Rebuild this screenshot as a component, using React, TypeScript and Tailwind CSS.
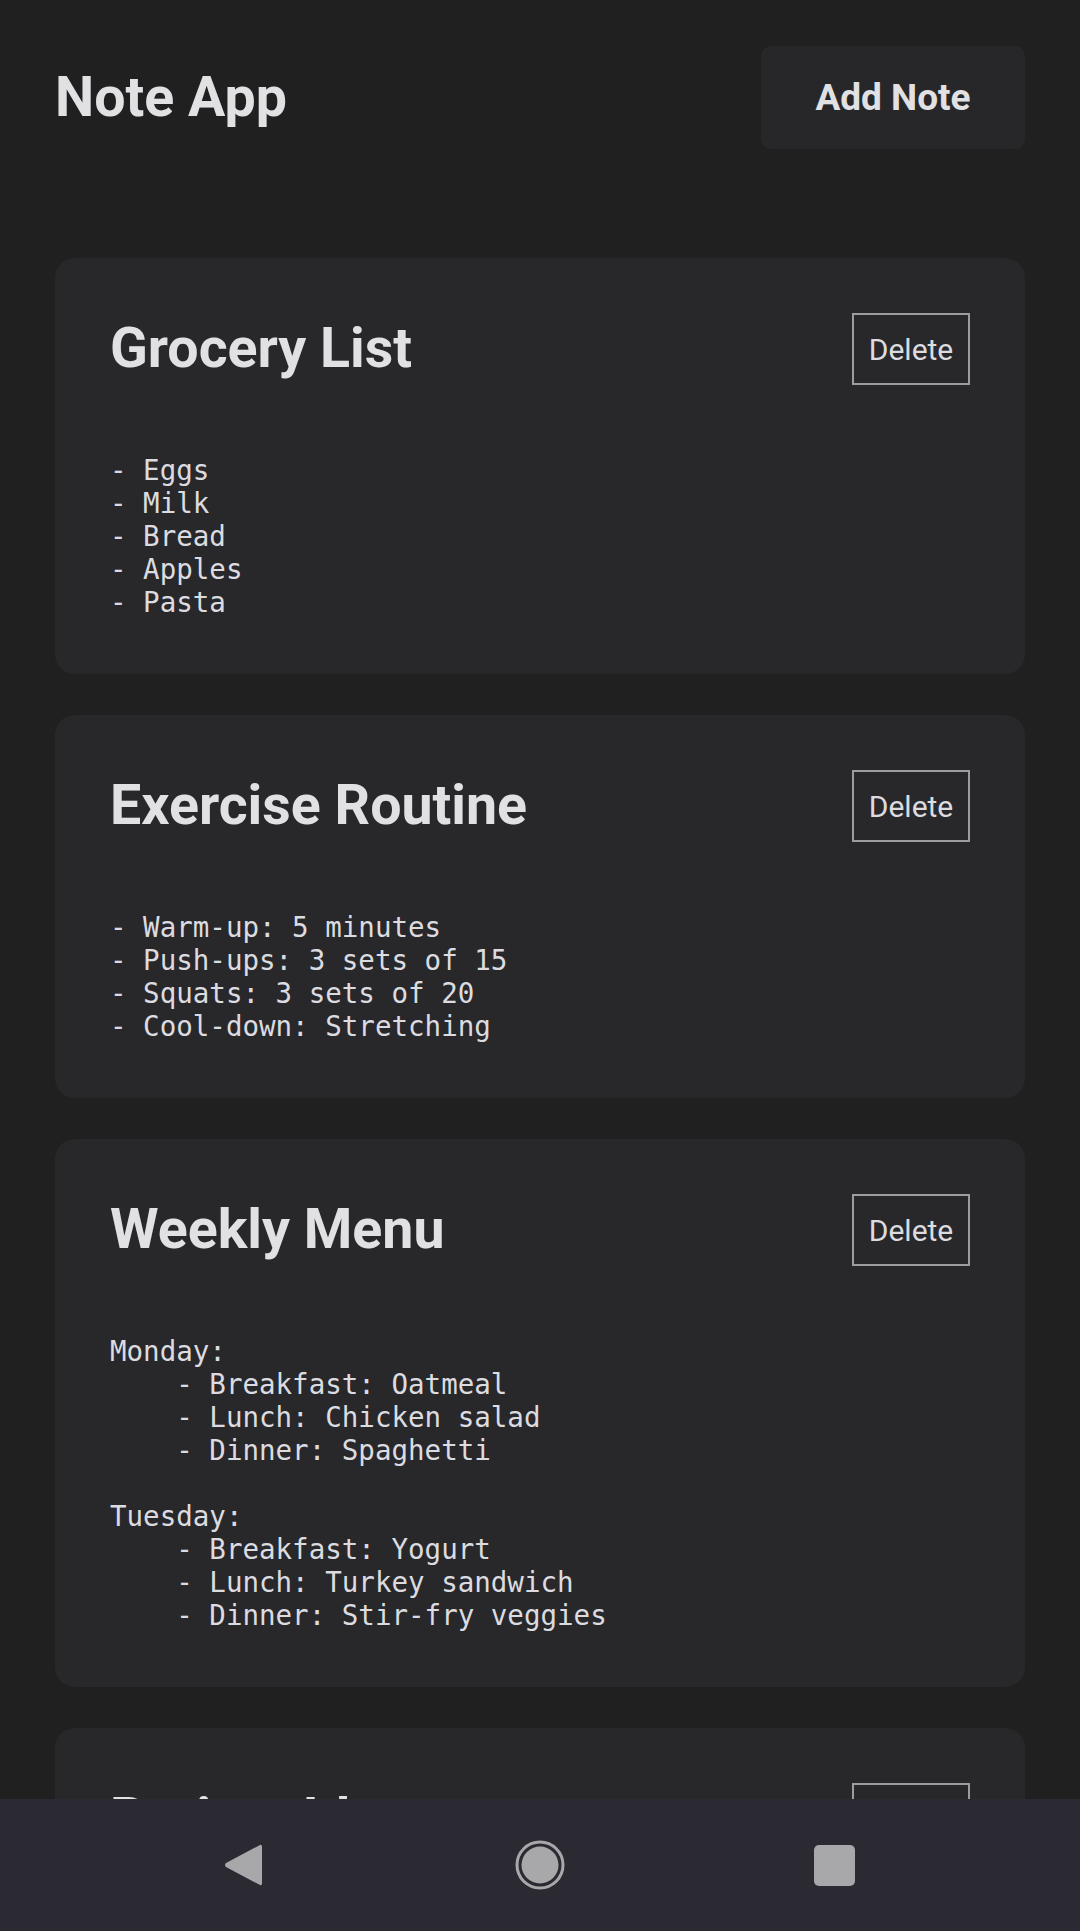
import React from 'react';

const NOTES = [
  {
    title: 'Grocery List',
    body: '- Eggs\n- Milk\n- Bread\n- Apples\n- Pasta',
  },
  {
    title: 'Exercise Routine',
    body: '- Warm-up: 5 minutes\n- Push-ups: 3 sets of 15\n- Squats: 3 sets of 20\n- Cool-down: Stretching',
  },
  {
    title: 'Weekly Menu',
    body:
      'Monday:\n    - Breakfast: Oatmeal\n    - Lunch: Chicken salad\n    - Dinner: Spaghetti\n\nTuesday:\n    - Breakfast: Yogurt\n    - Lunch: Turkey sandwich\n    - Dinner: Stir-fry veggies',
  },
  {
    title: 'Project Ideas',
    body: '- Build a note app\n- Learn TypeScript\n- Write a blog',
  },
];

function NoteCard({ title, body }: { title: string; body: string }) {
  return (
    <article className="bg-[#28282b] rounded-[20px] p-[55px]">
      <div className="flex items-center justify-between">
        <h2 className="font-['Roboto',sans-serif] font-bold text-[55.5px] leading-[64px] text-[#e1e1e4]">
          {title}
        </h2>
        <button className="h-[72px] w-[118px] border-2 border-[#9c9c9e] font-['Roboto',sans-serif] text-[30px] text-[#dcdce0]">
          Delete
        </button>
      </div>
      <pre className="mt-[69px] whitespace-pre font-['DejaVu_Sans_Mono',monospace] text-[27.5px] leading-[33px] text-[#dcdce0]">
        {body}
      </pre>
    </article>
  );
}

export default function App() {
  return (
    <div className="h-[1931px] w-[1080px] flex flex-col bg-[#202020] overflow-hidden">
      <div className="flex-1 overflow-hidden px-[55px] pt-[46px]">
        <header className="flex items-center justify-between">
          <h1 className="font-['Roboto',sans-serif] font-bold text-[55.5px] leading-[67px] text-[#e1e1e4]">
            Note App
          </h1>
          <button className="h-[103px] w-[264px] rounded-[10px] bg-[#27272a] font-['Roboto',sans-serif] font-bold text-[37px] text-[#e1e1e4]">
            Add Note
          </button>
        </header>

        <div className="mt-[109px] flex flex-col gap-[41px]">
          {NOTES.map((n) => (
            <NoteCard key={n.title} title={n.title} body={n.body} />
          ))}
        </div>
      </div>

      {/* android nav bar */}
      <nav className="h-[132px] shrink-0 bg-[#2b2a33] grid grid-cols-3 items-center">
        <div className="flex justify-end pr-[97px]">
          <svg width="40" height="46" viewBox="0 0 40 46">
            <path
              d="M37 3 Q39 2 39 5 L39 41 Q39 44 37 43 L3 25 Q1 23 3 21 Z"
              fill="#a8a8aa"
            />
          </svg>
        </div>
        <div className="flex justify-center">
          <svg width="50" height="50" viewBox="0 0 50 50">
            <circle cx="25" cy="25" r="23" fill="none" stroke="#a8a8aa" strokeWidth="3" />
            <circle cx="25" cy="25" r="18.5" fill="#a8a8aa" />
          </svg>
        </div>
        <div className="flex justify-start pl-[94px]">
          <div className="w-[41px] h-[41px] rounded-[5px] bg-[#a8a8aa]" />
        </div>
      </nav>
    </div>
  );
}
